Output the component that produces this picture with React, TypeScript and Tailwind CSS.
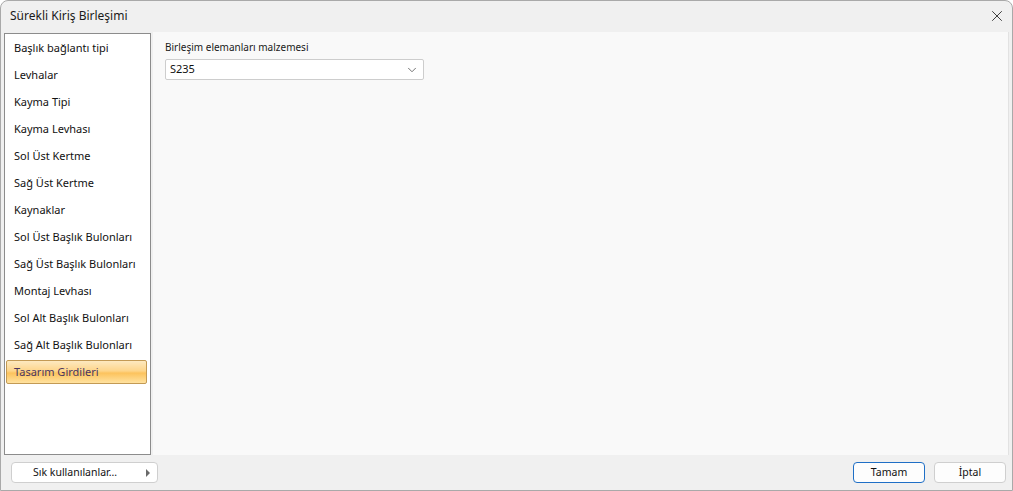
import { X, ChevronDown } from "lucide-react";

const ITEMS = [
  "Başlık bağlantı tipi",
  "Levhalar",
  "Kayma Tipi",
  "Kayma Levhası",
  "Sol Üst Kertme",
  "Sağ Üst Kertme",
  "Kaynaklar",
  "Sol Üst Başlık Bulonları",
  "Sağ Üst Başlık Bulonları",
  "Montaj Levhası",
  "Sol Alt Başlık Bulonları",
  "Sağ Alt Başlık Bulonları",
  "Tasarım Girdileri",
];

const SELECTED = "Tasarım Girdileri";

export default function App() {
  return (
    <div
      className="w-[1013px] h-[491px] bg-white"
      style={{ fontFamily: '"Noto Sans", "Segoe UI", sans-serif' }}
    >
      <div className="w-full h-full flex flex-col bg-[#f0f0f0] border border-[#a9a9a9] rounded-t-[8px] overflow-hidden text-[#1a1a1a]">
        {/* title bar */}
        <div className="h-[30px] flex items-center justify-between pl-[9px] pr-[6px] shrink-0">
          <span className="text-[12px] text-[#1a1a1a]">Sürekli Kiriş Birleşimi</span>
          <X className="w-[18px] h-[18px] text-[#1a1a1a]" strokeWidth={1.1} />
        </div>

        {/* body */}
        <div className="flex-1 flex min-h-0 pl-[3px] pr-[3px]">
          <div className="w-[147px] mt-[2px] bg-white border border-[#8c8c8c] flex flex-col pt-[1px] pl-[1px] pr-[3px]">
            {ITEMS.map((label) =>
              label === SELECTED ? (
                <div
                  key={label}
                  className="h-[24px] mt-[1px] flex items-center pl-[7px] border border-[#c39a54] rounded-[2px] text-[11px] whitespace-nowrap text-[#4b3660]"
                  style={{
                    background:
                      "linear-gradient(to bottom, #fde9c0 0%, #fdd58a 45%, #fcc35d 55%, #ffe2a0 100%)",
                  }}
                >
                  {label}
                </div>
              ) : (
                <div key={label} className="h-[27px] flex items-center pl-[8px] text-[11px] whitespace-nowrap text-[#111]">
                  {label}
                </div>
              )
            )}
          </div>

          <div className="flex-1 ml-[2px] mt-[1px] bg-[#f9f9f9] border-r border-[#e2e2e2] pl-[12px] pt-[7px]">
            <div className="text-[10px] text-[#1a1a1a] leading-[16px]">Birleşim elemanları malzemesi</div>
            <div className="mt-[4px] w-[259px] h-[21px] bg-white border border-[#cdcdcd] rounded-[2px] flex items-center justify-between pl-[4px] pr-[4px]">
              <span className="text-[11px] text-[#111]">S235</span>
              <ChevronDown className="w-[14px] h-[14px] text-[#555]" strokeWidth={1.4} />
            </div>
          </div>
        </div>

        {/* footer */}
        <div className="h-[35px] shrink-0 flex items-center justify-between pl-[10px] pr-[6px]">
          <button className="w-[147px] h-[21px] bg-white border border-[#cfcfcf] rounded-[4px] flex items-center justify-between pl-[21px] pr-[6px] text-[10.5px] text-[#111]">
            <span>Sık kullanılanlar…</span>
            <svg width="6" height="8" viewBox="0 0 6 8">
              <path d="M1 0 L5 4 L1 8 Z" fill="#6a6a6a" />
            </svg>
          </button>
          <div className="flex gap-[9px]">
            <button className="w-[72px] h-[21px] bg-[#fdfdfd] border border-[#1f6fc6] rounded-[4px] text-[10.5px] text-[#111] flex items-center justify-center">
              Tamam
            </button>
            <button className="w-[72px] h-[21px] bg-[#fdfdfd] border border-[#cfcfcf] rounded-[4px] text-[10.5px] text-[#111] flex items-center justify-center">
              İptal
            </button>
          </div>
        </div>
      </div>
    </div>
  );
}
